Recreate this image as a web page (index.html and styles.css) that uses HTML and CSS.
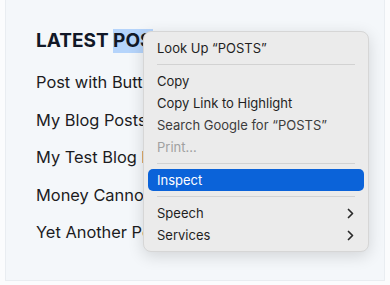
FILE: index.html
```html
<!DOCTYPE html>
<html lang="en">
<head>
  <meta charset="UTF-8" />
  <meta name="viewport" content="width=device-width, initial-scale=1.0">
  <title>Latest Posts</title>
  <link rel="stylesheet" href="styles.css">
</head>
<body>
  <div class="page">
    <h1 class="title">LATEST <span class="selected">POS</span>TS</h1>

    <ul class="posts">
      <li>Post with Buttons</li>
      <li>My Blog Posts</li>
      <li>My Test Blog Post</li>
      <li>Money Cannot Buy</li>
      <li>Yet Another Post</li>
    </ul>

    <!-- Context menu -->
    <div class="menu">
      <div class="menu-item">Look Up “POSTS”</div>
      <div class="sep"></div>
      <div class="menu-item">Copy</div>
      <div class="menu-item">Copy Link to Highlight</div>
      <div class="menu-item faded">Search Google for “POSTS”</div>
      <div class="menu-item dim">Print…</div>
      <div class="sep"></div>
      <div class="menu-item active">Inspect</div>
      <div class="sep"></div>
      <div class="menu-item">Speech
        <svg class="chevron" width="7" height="11" viewBox="0 0 7 11"><path d="M1.5 1.5 L5.5 5.5 L1.5 9.5" fill="none" stroke="#2a2a2a" stroke-width="1.7" stroke-linecap="round" stroke-linejoin="round"/></svg>
      </div>
      <div class="menu-item">Services
        <svg class="chevron" width="7" height="11" viewBox="0 0 7 11"><path d="M1.5 1.5 L5.5 5.5 L1.5 9.5" fill="none" stroke="#2a2a2a" stroke-width="1.7" stroke-linecap="round" stroke-linejoin="round"/></svg>
      </div>
    </div>
  </div>
</body>
</html>
```

FILE: styles.css
```css
body {
  margin: 0;
  background-color: #fbfcfd;
  font-family: Inter, "Noto Sans", sans-serif;
}

.page {
  position: relative;
  box-sizing: border-box;
  height: 281px;
  margin: 0 5px 4px 5px;
  padding: 26px 30px 0 30px;
  background-color: #f4f7fa;
  border: 1px solid #e9edf1;
  border-top: none;
  overflow: hidden;
}

.title {
  margin: 0;
  font-size: 19px;
  line-height: 29px;
  font-weight: 700;
  color: #111827;
  white-space: nowrap;
}

.selected {
  background-color: #b5d4fb;
  padding-bottom: 1px;
}

.posts {
  list-style: none;
  margin: 9px 0 0 0;
  padding: 0;
}

.posts li {
  font-size: 16.4px;
  line-height: 37.5px;
  color: #1c1c1e;
  white-space: nowrap;
}

.menu {
  position: absolute;
  left: 137px;
  top: 31px;
  width: 226px;
  box-sizing: border-box;
  padding: 5px 4px;
  background-color: #ebebeb;
  border: 1px solid #d6d6d6;
  border-radius: 8px;
  box-shadow: 0 4px 16px rgba(0, 0, 0, 0.14);
}

.menu-item {
  display: flex;
  align-items: center;
  justify-content: space-between;
  height: 22px;
  padding: 0 10px 0 9px;
  font-size: 13px;
  color: #1f1f1f;
  border-radius: 5px;
  white-space: nowrap;
}

.menu-item.faded {
  color: #3c3c3c;
}

.menu-item.dim {
  color: #a0a0a0;
}

.menu-item.active {
  background-color: #0b63d9;
  color: #fff;
}

.sep {
  height: 1px;
  margin: 5px 9px;
  background-color: #d2d2d2;
}
```
